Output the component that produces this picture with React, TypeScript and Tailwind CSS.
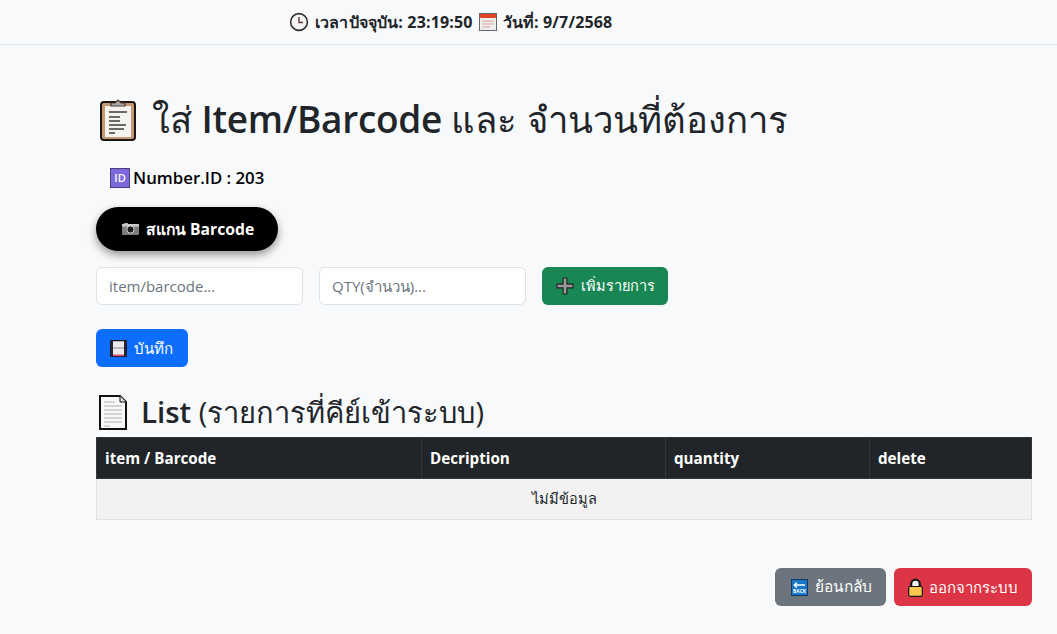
import React from 'react'

const ClockIcon = () => (
  <svg width="20" height="20" viewBox="0 0 20 20" className="shrink-0">
    <circle cx="10" cy="10" r="8.4" fill="#f4f4f4" stroke="#333" strokeWidth="1.6" />
    <path d="M10 5v5.5h4" fill="none" stroke="#6b3a3a" strokeWidth="1.4" />
  </svg>
)

const CalendarIcon = () => (
  <svg width="18" height="18" viewBox="0 0 18 18" className="shrink-0">
    <rect x="0.5" y="0.5" width="17" height="17" fill="#eee" stroke="#666" />
    <rect x="1" y="1" width="16" height="4" fill="#e2452b" />
    <path d="M3 8h12M3 11h12M3 14h8" stroke="#dba49c" strokeWidth="1.2" />
  </svg>
)

const ClipboardIcon = () => (
  <svg width="36" height="43" viewBox="0 0 36 43" className="shrink-0">
    <rect x="1" y="4" width="34" height="38" rx="3" fill="#c49a74" stroke="#1d1512" strokeWidth="2" />
    <rect x="5" y="8" width="26" height="31" fill="#f5f3ee" />
    <path d="M11 8V5h4l3-3 3 3h4v3z" fill="#a8a8a8" stroke="#4a3a30" strokeWidth="1.2" />
    <path d="M9 14h18M9 19h11M9 23h11M9 27h17M9 31h15M9 35h6" stroke="#3c3c3c" strokeWidth="1.3" />
  </svg>
)

const IdIcon = () => (
  <svg width="20" height="20" viewBox="0 0 20 20" className="shrink-0">
    <rect x="0.5" y="0.5" width="19" height="19" fill="#7d68dc" stroke="#4a4080" />
    <text x="10" y="14" textAnchor="middle" fontSize="11" fontFamily="Open Sans, sans-serif" fill="#fff">ID</text>
  </svg>
)

const CameraIcon = () => (
  <svg width="17" height="12" viewBox="0 0 17 12" className="shrink-0">
    <rect x="0" y="1" width="17" height="11" rx="1" fill="#7d7d7d" />
    <rect x="2" y="0" width="4" height="2" fill="#aaa" />
    <rect x="0" y="1" width="17" height="2.5" fill="#c9c9c9" />
    <circle cx="8.5" cy="6.5" r="3.6" fill="#1c1c1c" stroke="#e0e0e0" strokeWidth="0.9" />
  </svg>
)

const PlusIcon = () => (
  <svg width="18" height="18" viewBox="0 0 19 19" className="shrink-0">
    <path d="M7.5 1h4v6.5H18v4h-6.5V18h-4v-6.5H1v-4h6.5z" fill="#9a9a9a" stroke="#222" strokeWidth="1.2" />
  </svg>
)

const SaveIcon = () => (
  <svg width="17" height="17" viewBox="0 0 17 17" className="shrink-0">
    <rect x="0.5" y="0.5" width="16" height="16" rx="1.5" fill="#e9e9ee" stroke="#1c1926" strokeWidth="1.4" />
    <rect x="1" y="1" width="2" height="15" fill="#2a2633" />
    <rect x="14" y="1" width="2" height="15" fill="#2a2633" />
    <rect x="3" y="7.5" width="11" height="1" fill="#8a8694" />
    <rect x="3" y="14.5" width="11" height="1.6" fill="#e0507e" />
  </svg>
)

const PageIcon = () => (
  <svg width="28" height="35" viewBox="0 0 28 35" className="shrink-0">
    <path d="M1 1h20l6 6v27H1z" fill="#f8f8f8" stroke="#111" strokeWidth="2" />
    <path d="M21 1v6h6" fill="#ddd" stroke="#111" strokeWidth="1" />
    <path d="M5 7h11M5 11h18M5 15h18M5 19h18M5 23h18M5 27h18M5 31h6" stroke="#b0b0b0" strokeWidth="1.2" />
  </svg>
)

const BackIcon = () => (
  <svg width="17" height="17" viewBox="0 0 17 17" className="shrink-0">
    <rect x="0.5" y="0.5" width="16" height="16" fill="#1877c9" stroke="#123a5e" />
    <path d="M3 6h11M3 6l3-2.5M3 6l3 2.5" fill="none" stroke="#fff" strokeWidth="1.3" />
    <text x="8.5" y="14" textAnchor="middle" fontSize="4.8" fontWeight="700" fontFamily="Open Sans, sans-serif" fill="#fff">BACK</text>
  </svg>
)

const LockIcon = () => (
  <svg width="15" height="19" viewBox="0 0 15 19" className="shrink-0">
    <path d="M3.2 9V6a4.3 4.3 0 0 1 8.6 0v3" fill="#f3f3f3" stroke="#141414" strokeWidth="2.2" />
    <rect x="0.7" y="8.5" width="13.6" height="9.8" rx="1.5" fill="#fbc74e" stroke="#141414" strokeWidth="1.2" />
  </svg>
)

const FONT = "font-['Open_Sans','Noto_Sans',Roboto,sans-serif]"

export default function App() {
  return (
    <div className={`min-h-[634px] bg-[#f8f9fa] text-[#212529] ${FONT}`}>
      {/* top clock bar */}
      <div className="flex h-[45px] items-center border-b border-[#dee2e6] pl-[289px] text-[16px] font-bold tracking-[0.15px] text-[#212529]">
        <ClockIcon />
        <span className="ml-[6px]">เวลาปัจจุบัน: 23:19:50</span>
        <span className="ml-[6px]"><CalendarIcon /></span>
        <span className="ml-[6px]">วันที่: 9/7/2568</span>
      </div>

      <div className="pl-[96px] pr-[25px] pt-[50px]">
        {/* latin words are heavier than the thai ones in the heading */}
        <h1 className="flex h-[48px] items-center gap-[16px] pl-[4px] text-[36.5px] font-normal leading-[48px]">
          <ClipboardIcon />
          <span>
            ใส่ <span className="text-[37px] font-semibold tracking-[-0.3px]">Item/Barcode</span> และ จำนวนที่ต้องการ
          </span>
        </h1>

        <div className="mt-[23px] flex h-[24px] items-center pl-[14px] text-[16.8px] font-semibold text-black">
          <IdIcon />
          <span className="ml-[3px]">Number.ID : 203</span>
        </div>

        <button className="mt-[17px] flex h-[44px] w-[182px] items-center gap-[7px] rounded-full bg-black pl-[26px] text-[15.7px] font-bold text-white shadow-[0_4px_8px_rgba(0,0,0,0.4)]">
          <CameraIcon />
          <span className="pt-[1px]">สแกน Barcode</span>
        </button>

        <div className="mt-[16px] flex gap-[16px]">
          <input
            placeholder="item/barcode..."
            className="h-[38px] w-[207px] rounded-md border border-[#dee2e6] bg-white px-3 text-[15px] placeholder:text-[#6c757d]"
          />
          <input
            placeholder="QTY(จำนวน)..."
            className="h-[38px] w-[207px] rounded-md border border-[#dee2e6] bg-white px-3 text-[15px] placeholder:text-[#6c757d]"
          />
          <button className="flex h-[38px] w-[126px] items-center gap-[7px] rounded-md bg-[#198754] pl-[14px] text-[14.5px] font-medium text-white">
            <PlusIcon />
            <span>เพิ่มรายการ</span>
          </button>
        </div>

        <button className="mt-[24px] flex h-[38px] w-[92px] items-center gap-[7px] rounded-md bg-[#0d6efd] pl-[14px] text-[15px] font-medium text-white">
          <SaveIcon />
          <span>บันทึก</span>
        </button>

        <h2 className="mt-[24px] flex h-[42px] items-center gap-[14px] pl-[3px] text-[29px] font-normal leading-[38px]">
          <PageIcon />
          <span>
            <span className="text-[29.5px] font-semibold">List</span> (รายการที่คีย์เข้าระบบ)
          </span>
        </h2>

        <table className="mt-[4px] w-full table-fixed border-collapse text-[15.2px]">
          <thead>
            <tr className="h-[41px] bg-[#212529] text-left text-white">
              <th className="w-[325px] border border-[#32383e] px-2 font-bold">item / Barcode</th>
              <th className="w-[244px] border border-[#32383e] px-2 font-bold">Decription</th>
              <th className="w-[204px] border border-[#32383e] px-2 font-bold">quantity</th>
              <th className="border border-[#32383e] px-2 font-bold">delete</th>
            </tr>
          </thead>
          <tbody>
            <tr className="h-[41px] bg-[#f2f2f2]">
              <td colSpan={4} className="border border-[#dee2e6] text-center text-[14.5px] font-medium text-[#212529]">ไม่มีข้อมูล</td>
            </tr>
          </tbody>
        </table>

        <div className="mt-[48px] flex justify-end gap-[8px]">
          <button className="flex h-[38px] w-[111px] items-center gap-[7px] rounded-md bg-[#6c757d] pl-[16px] text-[15.5px] font-medium text-white">
            <BackIcon />
            <span>ย้อนกลับ</span>
          </button>
          <button className="flex h-[38px] w-[138px] items-center gap-[6px] rounded-md bg-[#dc3545] pl-[14px] text-[15px] font-medium text-white">
            <LockIcon />
            <span>ออกจากระบบ</span>
          </button>
        </div>
      </div>
    </div>
  )
}
